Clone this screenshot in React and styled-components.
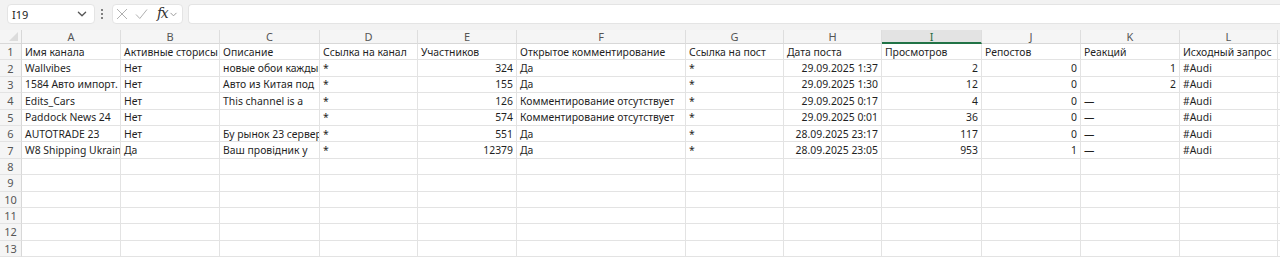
import React from 'react';
import styled, { createGlobalStyle } from 'styled-components';

const GlobalStyle = createGlobalStyle`
  html, body {
    margin: 0;
    padding: 0;
    background: #ffffff;
  }
  body {
    font-family: 'Noto Sans', 'Liberation Sans', sans-serif;
    color: #1f1f1f;
  }
`;

const COLUMNS = [
  { key: 'A', width: 99 },
  { key: 'B', width: 99 },
  { key: 'C', width: 100 },
  { key: 'D', width: 98 },
  { key: 'E', width: 99 },
  { key: 'F', width: 169 },
  { key: 'G', width: 98 },
  { key: 'H', width: 98 },
  { key: 'I', width: 100 },
  { key: 'J', width: 99 },
  { key: 'K', width: 99 },
  { key: 'L', width: 98 },
];

const SELECTED_COL = 'I';
const ROW_COUNT = 13;

// { r: ... } = right aligned (numbers, dates), plain string = left aligned
const DATA = [
  ['Имя канала', 'Активные сторисы', 'Описание', 'Ссылка на канал', 'Участников', 'Открытое комментирование', 'Ссылка на пост', 'Дата поста', 'Просмотров', 'Репостов', 'Реакций', 'Исходный запрос'],
  ['Wallvibes', 'Нет', 'новые обои каждый день', '*', { r: '324' }, 'Да', '*', { r: '29.09.2025 1:37' }, { r: '2' }, { r: '0' }, { r: '1' }, '#Audi'],
  ['1584 Авто импорт. 24', 'Нет', 'Авто из Китая под', '*', { r: '155' }, 'Да', '*', { r: '29.09.2025 1:30' }, { r: '12' }, { r: '0' }, { r: '2' }, '#Audi'],
  ['Edits_Cars', 'Нет', 'This channel is a', '*', { r: '126' }, 'Комментирование отсутствует', '*', { r: '29.09.2025 0:17' }, { r: '4' }, { r: '0' }, '—', '#Audi'],
  ['Paddock News 24', 'Нет', '', '*', { r: '574' }, 'Комментирование отсутствует', '*', { r: '29.09.2025 0:01' }, { r: '36' }, { r: '0' }, '—', '#Audi'],
  ['AUTOTRADE 23', 'Нет', 'Бу рынок 23 сервер', '*', { r: '551' }, 'Да', '*', { r: '28.09.2025 23:17' }, { r: '117' }, { r: '0' }, '—', '#Audi'],
  ['W8 Shipping Ukraine', 'Да', 'Ваш провідник у', '*', { r: '12379' }, 'Да', '*', { r: '28.09.2025 23:05' }, { r: '953' }, { r: '1' }, '—', '#Audi'],
];

const Page = styled.div`
  width: 1280px;
  height: 259px;
  overflow: hidden;
  background: #ffffff;
`;

const Toolbar = styled.div`
  display: flex;
  align-items: center;
  height: 30px;
  padding: 0 0 2px 7px;
  box-sizing: border-box;
  background: #f2f2f2;
`;

const Field = styled.div`
  display: flex;
  align-items: center;
  height: 20px;
  box-sizing: border-box;
  background: #ffffff;
  border: 1px solid #e4e4e4;
  border-radius: ${({ $open }) => ($open ? '4px 0 0 4px' : '4px')};
  border-right: ${({ $open }) => ($open ? 'none' : '1px solid #e4e4e4')};
  width: ${({ $w }) => ($w ? `${$w}px` : 'auto')};
  flex: ${({ $grow }) => ($grow ? '1' : 'none')};
  margin-left: ${({ $ml }) => $ml || 0}px;
`;

const NameText = styled.span`
  flex: 1;
  padding-left: 4px;
  font-size: 11px;
  color: #222;
`;

const Dots = styled.div`
  display: flex;
  flex-direction: column;
  gap: 2px;
  margin-left: 6px;
  span {
    width: 2px;
    height: 2px;
    border-radius: 1px;
    background: #5a5a5a;
  }
`;

const Fx = styled.span`
  font-family: 'DejaVu Serif', 'Liberation Serif', serif;
  font-style: italic;
  font-size: 14px;
  color: #333;
  margin: -3px 0 0 9px;
  letter-spacing: -1.5px;
`;

const Icon = styled.svg`
  display: block;
  flex: none;
  margin-left: ${({ $ml }) => $ml || 0}px;
`;

const Grid = styled.div`
  display: grid;
  grid-template-columns: 22px ${COLUMNS.map((c) => `${c.width}px`).join(' ')} 1fr;
  grid-template-rows: 14px repeat(${ROW_COUNT}, 16.4px);
`;

const Corner = styled.div`
  position: relative;
  background: #f5f5f5;
  border-right: 1px solid #d8d8d8;
  border-bottom: 1px solid #d8d8d8;
  &::after {
    content: '';
    position: absolute;
    right: 3px;
    bottom: 2px;
    width: 0;
    height: 0;
    border-left: 9px solid transparent;
    border-bottom: 9px solid #dcdcdc;
  }
`;

const ColHead = styled.div`
  display: flex;
  align-items: center;
  justify-content: center;
  font-size: 11px;
  line-height: 1;
  background: ${({ $sel }) => ($sel ? '#e3e3e3' : '#f5f5f5')};
  color: ${({ $sel }) => ($sel ? '#1d6b3e' : '#555')};
  border-right: 1px solid #dedede;
  border-bottom: ${({ $sel }) => ($sel ? '2px solid #217346' : '1px solid #d8d8d8')};
  box-sizing: border-box;
`;

const RowHead = styled.div`
  display: flex;
  align-items: center;
  justify-content: center;
  font-size: 11px;
  color: #555;
  background: #f5f5f5;
  border-right: 1px solid #d8d8d8;
  border-bottom: 1px solid #e3e3e3;
  box-sizing: border-box;
  overflow: hidden;
`;

const Cell = styled.div`
  display: flex;
  align-items: center;
  justify-content: ${({ $right }) => ($right ? 'flex-end' : 'flex-start')};
  padding: 0 3px;
  font-size: 10.4px;
  white-space: nowrap;
  overflow: hidden;
  color: #1f1f1f;
  border-right: 1px solid #e3e3e3;
  border-bottom: 1px solid #e3e3e3;
  box-sizing: border-box;
`;

const Filler = styled.div`
  border-bottom: ${({ $head }) => ($head ? '1px solid #d8d8d8' : '1px solid #e3e3e3')};
  background: ${({ $head }) => ($head ? '#f5f5f5' : '#fff')};
  box-sizing: border-box;
`;

const Chevron = ({ size = 10, ml = 0, color = '#666' }) => (
  <Icon $ml={ml} width={size} height={size} viewBox="0 0 10 10">
    <path d="M2 3.5 L5 6.5 L8 3.5" fill="none" stroke={color} strokeWidth="1.1" strokeLinecap="round" strokeLinejoin="round" />
  </Icon>
);

const renderCell = (value, r, c) => {
  const right = typeof value === 'object' && value !== null;
  const text = right ? value.r : value;
  return (
    <Cell key={`${r}-${c}`} $right={right}>
      {text}
    </Cell>
  );
};

const App = () => {
  const rows = [];
  for (let r = 0; r < ROW_COUNT; r += 1) {
    const data = DATA[r] || [];
    rows.push(<RowHead key={`h${r}`}>{r + 1}</RowHead>);
    COLUMNS.forEach((col, c) => rows.push(renderCell(data[c] ?? '', r, c)));
    rows.push(<Filler key={`f${r}`} />);
  }

  return (
    <>
      <GlobalStyle />
      <Page>
        <Toolbar>
          <Field $w={88}>
            <NameText>I19</NameText>
            <Chevron size={12} color="#555" />
            <span style={{ width: 6 }} />
          </Field>
          <Dots>
            <span />
            <span />
            <span />
          </Dots>
          <Field $w={71} $ml={9}>
            <Icon $ml={3} width={12} height={12} viewBox="0 0 12 12">
              <path d="M1 1 L11 11 M11 1 L1 11" stroke="#b0b0b0" strokeWidth="1" fill="none" />
            </Icon>
            <Icon $ml={7} width={13} height={12} viewBox="0 0 13 12">
              <path d="M1 6.5 L4.8 10.5 L12 1.5" stroke="#b0b0b0" strokeWidth="1" fill="none" />
            </Icon>
            <Fx>fx</Fx>
            <Chevron ml={2} size={9} color="#9a9a9a" />
          </Field>
          <Field $grow $open $ml={5} />
        </Toolbar>
        <Grid>
          <Corner />
          {COLUMNS.map((col) => (
            <ColHead key={col.key} $sel={col.key === SELECTED_COL}>
              {col.key}
            </ColHead>
          ))}
          <Filler $head />
          {rows}
        </Grid>
      </Page>
    </>
  );
};

export default App;
